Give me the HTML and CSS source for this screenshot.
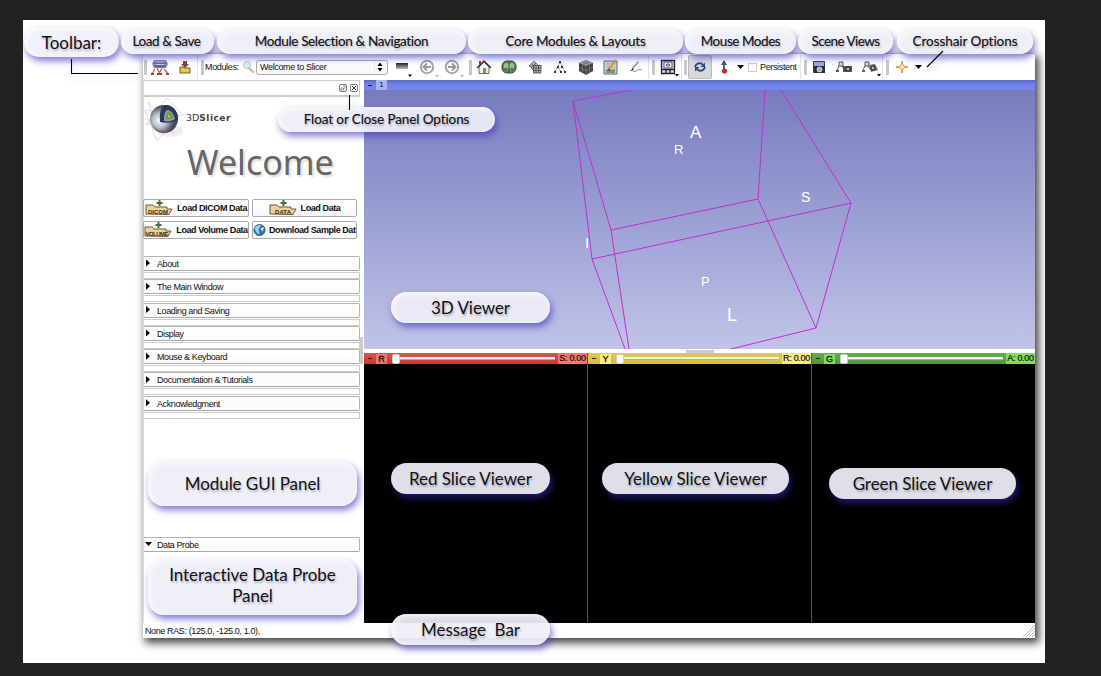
FILE: index.html
```html
<!DOCTYPE html>
<html lang="en">
<head>
<meta charset="utf-8">
<title>3D Slicer main window</title>
<link rel="stylesheet" href="styles.css">
</head>
<body>
<main class="sheet">
  <section class="app">
    <div class="toolbar">
      <i class="grip"></i>
      <svg width="18" height="18" viewBox="0 0 18 18"><path d="M4 11L1 16M6 10l3 6M13 11l4 5M11 10l-3 6" stroke="#a56a4c" stroke-width="1.3" fill="none"/><path d="M3 2h12l2 4-2 4H3L1 6z" fill="#8c8fc4"/><path d="M2 5h14M3 8h12M6 2v8M9 2v8M12 2v8" stroke="#474b83" stroke-width=".9"/><path d="M5 4h8M5 6.5h8" stroke="#dfe1f6" stroke-width=".8"/><path d="M0 15h3v2H0zM6 15h3v2H6zM9 15h2v2H9zM15 15h3v2h-3z" fill="#8d4b37"/></svg>
      <svg width="14" height="16" viewBox="0 0 14 16"><path d="M2 8h3l1 1h6v5H2z" fill="#ecc650" stroke="#725b26"/><path d="M5 2h4v3h2L7 9 3 5h2z" fill="#87452e"/></svg>
      <i class="divider"></i><i class="grip"></i>
      <span class="tool-label">Modules:</span>
      <svg width="13" height="14" viewBox="0 0 13 14"><path d="M7 8l4 4" stroke="#dfb67e" stroke-width="2.4" stroke-linecap="round"/><circle cx="5" cy="5" r="3.5" fill="#d6f0f7" stroke="#b9c8d2"/></svg>
      <div class="module-select"><span>Welcome to Slicer</span><svg width="12" height="12" viewBox="0 0 12 12"><path d="M0 0v12" stroke="#ddd"/><path d="M3.500 5L6 1.500 8.500 5zM3.500 7L6 10.500 8.500 7z"/></svg></div>
      <svg width="26" height="24" viewBox="0 0 26 24"><defs><linearGradient id="bar" x2="0" y2="1"><stop stop-color="#222"/><stop offset="1" stop-color="#bbb"/></linearGradient></defs><path d="M8 8h12v6H8z" fill="url(#bar)"/><path d="M20 19.500h4l-2 2.500z"/></svg>
      <svg width="24" height="24" viewBox="0 0 24 24"><circle cx="12" cy="12" r="6.200" fill="#fff" stroke="#a5a5a5" stroke-width="2"/><path d="M16 12H9M12 8.500L8.500 12l3.500 3.500" fill="none" stroke="#999" stroke-width="1.900"/><path d="M20 20h4l-2 2.500z" fill="#bbb"/></svg>
      <svg width="24" height="24" viewBox="0 0 24 24"><circle cx="12" cy="12" r="6.200" fill="#fff" stroke="#a5a5a5" stroke-width="2"/><path d="M8 12h7M12 8.500l3.500 3.500-3.500 3.500" fill="none" stroke="#999" stroke-width="1.900"/><path d="M20 20h4l-2 2.500z" fill="#bbb"/></svg>
      <i class="grip"></i>
      <svg width="16" height="16" viewBox="0 0 16 16"><path d="M3 8v6.500h10V8L8 3z" fill="#f5f5ee" stroke="#666"/><path d="M1 9l7-7 7 7" fill="none" stroke="#333" stroke-width="1.400"/><path d="M7 9h3v5H7z" fill="#c77435"/><path d="M3 2h2v3L3 6z" fill="#a33"/></svg>
      <svg width="16" height="14" viewBox="0 0 16 14"><rect x="1" y="1" width="14" height="12" rx="5" fill="#5d8a4e" stroke="#37483a"/><ellipse cx="5.500" cy="6" rx="2.600" ry="3" fill="#9cc48a"/><ellipse cx="10.500" cy="6" rx="2.600" ry="3" fill="#9cc48a"/><path d="M8 2v10M3 10l3-2M13 10l-3-2" stroke="#37583a" fill="none"/></svg>
      <svg width="14" height="14" viewBox="0 0 14 14"><path d="M1 6l5-4 3 3v6H6z" fill="#aaa"/><path d="M1 5l5 6M3 3l5 6M6 1l4 4M1 6l5-5M3 8l5-5" stroke="#555" stroke-width=".8"/><path d="M5 5h8v8H5z" fill="#bbb"/><path d="M5.500 5v8M8 5v8M10.500 5v8M13 5v8M5 5.500h8M5 8h8M5 10.500h8M5 13h8" stroke="#444" stroke-width=".8"/></svg>
      <svg width="14" height="14" viewBox="0 0 14 14"><path d="M7 2L2 12M7 2l5 10M5 7l3 5" fill="none" stroke="#555" stroke-dasharray="2 1"/><path d="M6 1h2v2H6zM1 11h2v2H1zM7 11h2v2H7zM11 11h2v2h-2zM4 6h2v2H4zM8 6h2v2H8z" fill="#333"/></svg>
      <svg width="16" height="17" viewBox="0 0 16 17"><path d="M8 1l7 3v8l-7 4-7-4V4z" fill="#444"/><path d="M1 4l7-3 7 3-7 3z" fill="#9b9b9b"/><path d="M8 7v9M1 8l7 4 7-4M4.500 5.500v8M11.500 5.500v8M4.500 2.500l7 3M11.500 2.500l-7 3" stroke="#777" stroke-width=".8" fill="none"/></svg>
      <svg width="15" height="16" viewBox="0 0 15 16"><path d="M1 2h13v13H1z" fill="#d8dde1" stroke="#506b82"/><path d="M1 5h13M1 8h13M1 11h13M5 2v13M9 2v13" stroke="#8aa1b5" stroke-width=".7"/><path d="M3 11c4-4 5 3 9-2v5H3z" fill="#81917a"/><path d="M13 1L6 10" stroke="#d6a52c" stroke-width="2.500"/><path d="M6 9l-1 3 2-1z" fill="#333"/></svg>
      <svg width="14" height="14" viewBox="0 0 14 14"><path d="M9.500 1.500L3 9" fill="none" stroke="#888" stroke-width="1.200"/><path d="M1 11c3-2 3 2 6 0s4-2 6-1" fill="none" stroke="#888"/><path d="M3.500 8l-1.500 3 3-1.500z" fill="#333"/></svg>
      <i class="divider"></i><i class="grip"></i>
      <svg width="22" height="24" viewBox="0 0 22 24"><path d="M4.500 5.500h13v13h-13zM4.500 14.500h13M9 14.500v4M13 14.500v4" fill="#d8daeb" stroke="#222" stroke-width="1.300"/><path d="M7 7h8v6H7z" fill="#fff" stroke="#444c88"/><path d="M9.500 9h3v2h-3z" fill="none" stroke="#444c88"/><path d="M18 19h4l-2 2.500z"/></svg>
      <i class="divider"></i><i class="grip"></i>
      <div class="mode-button"><svg width="14" height="14" viewBox="0 0 14 14"><path d="M2 7c1-4 6-5 8-2M12 7c-1 4-6 5-8 2" stroke="#254d8f" stroke-width="1.800" fill="none"/><path d="M12 2.500V7H7.500zM2 11.500V7h4.500z" fill="#254d8f"/></svg></div>
      <svg width="10" height="16" viewBox="0 0 10 16"><path d="M5 2v9" stroke="#333" stroke-width="1.500"/><path d="M2 6l3-5 3 5z" fill="#315f80"/><circle cx="5.500" cy="12" r="2.600" fill="#d7242a"/></svg>
      <svg width="7" height="4" viewBox="0 0 7 4"><path d="M0 0h7L3.500 4z"/></svg>
      <i class="checkbox"></i>
      <span class="tool-label">Persistent</span>
      <i class="divider"></i><i class="grip"></i>
      <svg width="14" height="16" viewBox="0 0 14 16"><path d="M1.500 2.500h11v11h-11z" fill="#9da7d5" stroke="#333c67"/><rect x="2" y="7" width="11" height="7" fill="#292c35"/><circle cx="7.500" cy="10.500" r="2.500" fill="#aab" stroke="#fff" stroke-width=".7"/></svg>
      <svg width="16" height="14" viewBox="0 0 16 14"><path d="M3 2h4v4H3zM3 6l-2 4M6 6l3 5" fill="#ddd" stroke="#555"/><path d="M0 10h3v2H0zM7 6h9v6H7z" fill="#555"/><circle cx="12" cy="9" r="2" fill="#bbb" stroke="#222"/></svg>
      <svg width="24" height="24" viewBox="0 0 24 24"><path d="M7 7h4v4H7zM7 11l-2 4M10 11l3 4" fill="#ddd" stroke="#555"/><path d="M4 15h3v2H4zM11 10l6-1 3 6-7 2z" fill="#666"/><circle cx="15" cy="13" r="2" fill="#bbb" stroke="#222"/><path d="M19 19h4l-2 2.500z"/></svg>
      <i class="divider"></i><i class="grip"></i>
      <svg width="14" height="14" viewBox="0 0 14 14"><path d="M7 1v12M1 7h12" stroke="#d78a2a" stroke-width="1.500"/><path d="M7 3l1.500 2.500L11 7 8.500 8.500 7 11 5.500 8.500 3 7l2.500-1.500z" fill="#fae2b2" stroke="#d79238"/></svg>
      <svg width="7" height="4" viewBox="0 0 7 4"><path d="M0 0h7L3.500 4z"/></svg>
    </div>

    <div class="workspace">
      <aside class="panel">
        <div class="panel-title">
          <svg width="8" height="8" viewBox="0 0 8 8"><rect x=".5" y=".5" width="7" height="7" rx="1.500" fill="#fff" stroke="#777"/><path d="M2 4h2.500v2H2zM4 2h2v2.500" fill="none" stroke="#666" stroke-width=".7"/></svg>
          <svg width="8" height="8" viewBox="0 0 8 8"><rect x=".5" y=".5" width="7" height="7" rx="1.500" fill="#fff" stroke="#777"/><path d="M2 2l4 4M6 2L2 6" stroke="#333"/></svg>
        </div>
        <div class="brand">
          <svg width="42" height="46" viewBox="0 0 42 46"><defs><radialGradient id="ball" cx=".35" cy=".55"><stop stop-color="#fff"/><stop offset=".5" stop-color="#b9bfce"/><stop offset="1" stop-color="#4b4b59"/></radialGradient></defs><path d="M2 13l34 5-22 26zM24 1L3 28l37-10zM5 5l27 32-19-9z" fill="none" stroke="#ccc" stroke-width=".7"/><ellipse cx="27" cy="34" rx="13" ry="6" fill="#ddd" opacity=".5"/><circle cx="21" cy="22" r="14" fill="url(#ball)"/><path d="M17 25C16 13 19 8 24 8c7 1 11 7 11 14-4 3-11 5-18 3z" fill="#2b385b"/><path d="M21 24c0-7 1-11 4-11 4 1 6 5 7 9-3 2-7 3-11 2z" fill="#8c9dac"/><path d="M23 22c0-4 1-7 3-7 3 1 4 4 4 6-2 1-5 2-7 1z" fill="#69983f"/><path d="M25 21v-4l3 3z" fill="#e0a94b"/><path d="M9 29c8 7 17 7 24 0-4 9-19 10-24 0z" fill="#754f50" opacity=".55"/></svg>
          <span class="brand-name">3D<b>Slicer</b></span>
        </div>
        <h1 class="welcome">Welcome</h1>
        <div class="loaders">
          <button class="loader"><svg width="28" height="16" viewBox="0 0 28 16"><path d="M1 14V5h7l2 2h12v2h5l-3 5.500z" fill="#ead09b" stroke="#6f5a32"/><path d="M13.500 0h2v2h2v2h-2v2h-2V4h-2V2h2z" fill="#43713b"/><text class="folder-text" x="13" y="13.500" textLength="20">DICOM</text></svg><span>Load DICOM Data</span></button>
          <button class="loader"><svg width="28" height="16" viewBox="0 0 28 16"><path d="M1 14V5h7l2 2h12v2h5l-3 5.500z" fill="#ead09b" stroke="#6f5a32"/><path d="M13.500 0h2v2h2v2h-2v2h-2V4h-2V2h2z" fill="#43713b"/><text class="folder-text" x="14" y="13.500" textLength="16">DATA</text></svg><span>Load Data</span></button>
          <button class="loader"><svg width="28" height="16" viewBox="0 0 28 16"><path d="M1 14V5h7l2 2h12v2h5l-3 5.500z" fill="#ead09b" stroke="#6f5a32"/><path d="M13.500 0h2v2h2v2h-2v2h-2V4h-2V2h2z" fill="#43713b"/><text class="folder-text" x="13" y="13.500" textLength="23">VOLUME</text></svg><span>Load Volume Data</span></button>
          <button class="loader sample"><svg width="13" height="14" viewBox="0 0 14 14"><circle cx="7" cy="7" r="6" fill="#3976ad" stroke="#275681"/><path d="M1.500 5C4 1 7 2 9 1L6 6l1 6-3-2z" fill="#9bd0ed"/><path d="M8 5l4-1-2 5z" fill="#eee9a8"/></svg><span>Download Sample Data</span></button>
        </div>
        <div class="sections">
          <div class="section">About</div><i class="strip"></i>
          <div class="section">The Main Window</div><i class="strip"></i>
          <div class="section">Loading and Saving</div><i class="strip"></i>
          <div class="section">Display</div><i class="strip"></i>
          <div class="section">Mouse &amp; Keyboard</div><i class="strip"></i>
          <div class="section">Documentation &amp; Tutorials</div><i class="strip"></i>
          <div class="section">Acknowledgment</div><i class="strip"></i>
        </div>
        <div class="section open">Data Probe</div>
        <i class="panel-handle"></i>
      </aside>

      <div class="views">
        <div class="view3d">
          <div class="view3d-bar"><i class="pin"></i><span>1</span></div>
          <svg class="scene" width="671" height="259" viewBox="364 90 671 259">
            <path class="wire" d="M632 90l-59 11 19 158 33 90M573 101l38 129 18 119M611 230l147-31 7-109M592 259l259-56-70-113M758 199l58 129 35-125M816 328l-85 21"/>
            <g class="axis"><text x="690" y="138" font-size="17">A</text><text x="674" y="154" font-size="13">R</text><text x="801" y="202" font-size="14">S</text><text x="585" y="248" font-size="15">I</text><text x="701" y="286" font-size="13">P</text><text x="727" y="321" font-size="18">L</text></g>
          </svg>
        </div>
        <div class="splitter"><i></i></div>
        <div class="slices">
          <div class="slice red"><div class="slice-bar"><i class="pin"></i><b>R</b><i class="track"></i><span>S: 0.00</span></div></div>
          <div class="slice yellow"><div class="slice-bar"><i class="pin"></i><b>Y</b><i class="track"></i><span>R: 0.00</span></div></div>
          <div class="slice green"><div class="slice-bar"><i class="pin"></i><b>G</b><i class="track"></i><span>A: 0.00</span></div></div>
        </div>
      </div>
    </div>
    <footer class="status"><span>None RAS: (125.0, -125.0, 1.0),</span><svg width="12" height="12" viewBox="0 0 12 12"><path d="M0 12L12 0M3 12l9-9M6 12l6-6M9 12l3-3" stroke="#aaa" stroke-width=".8"/></svg></footer>
  </section>

  <svg class="leaders" width="1022" height="642" viewBox="23 20 1022 642"><path d="M71.500 59v14.500H138M349.500 95v15M943 51l-16 16" fill="none" stroke="#000" stroke-width="1.100"/></svg>
  <div class="callout toolbar-note">Toolbar:</div>
  <div class="callout small load-note">Load &amp; Save</div>
  <div class="callout small modules-note">Module Selection &amp; Navigation</div>
  <div class="callout small core-note">Core Modules &amp; Layouts</div>
  <div class="callout small mouse-note">Mouse Modes</div>
  <div class="callout small scene-note">Scene Views</div>
  <div class="callout small cross-note">Crosshair Options</div>
  <div class="callout small float-note">Float or Close Panel Options</div>
  <div class="callout view-note">3D Viewer</div>
  <div class="callout red-note">Red Slice Viewer</div>
  <div class="callout yellow-note">Yellow Slice Viewer</div>
  <div class="callout green-note">Green Slice Viewer</div>
  <div class="callout gui-note">Module GUI Panel</div>
  <div class="callout probe-note">Interactive Data Probe<br>Panel</div>
  <div class="callout message-note">Message&nbsp; Bar</div>
</main>
</body>
</html>
```

FILE: styles.css
```css
* { box-sizing: border-box; }
body { margin: 0; padding: 20px 0 0 23px; height: 676px; overflow: hidden; background: #222; font: 9px "Liberation Sans", Arial, sans-serif; color: #111; }
svg { display: block; flex: none; }
.sheet { position: relative; width: 1022px; height: 642.500px; padding: 33px 10px 0 120px; background: #fff; overflow: hidden; }
.app { display: flex; flex-direction: column; width: 892px; height: 585px; background: #fff; box-shadow: 3px 4px 8px 1px rgba(0,0,0,.72); }

.toolbar { display: grid; height: 27px; flex: none; align-items: center; justify-items: center; border-top: 1px solid #bbb;
  grid-template-columns: 4px 25px 25px 3px 4px 36px 16px 132px 26px 25px 26px 10px 18px 32px 20px 30px 21px 28px 24px 3px 4px 26px 2px 4px 25px 24px 9px 14px 41px 3px 4px 24px 26px 25px 3px 4px 25px 8px; }
.grip { width: 3px; height: 15px; background: #c8c8c8; }
.divider { width: 1px; height: 24px; justify-self: start; background: #e2e2e2; }
.tool-label { justify-self: start; padding-left: 1px; white-space: nowrap; letter-spacing: -.35px; }
.module-select { display: flex; align-items: center; justify-content: space-between; width: 132px; height: 15px; padding: 0 1px 0 3px; border: 1px solid #aaa; border-radius: 3px; background: linear-gradient(#fff, #f4f4f4); letter-spacing: -.35px; }
.mode-button { display: flex; align-items: center; justify-content: center; width: 24px; height: 24px; border: 1px solid #bbb; border-radius: 2px; background: #d9d9d9; }
.checkbox { width: 9px; height: 9px; border: 1px solid #ccc; background: #fff; }

.workspace { display: flex; height: 543px; flex: none; }
.panel { position: relative; display: flex; flex-direction: column; width: 221px; padding-right: 4px; border-left: 1px solid #ddd; }
.panel-title { display: flex; justify-content: flex-end; align-items: center; gap: 3px; height: 17px; padding-right: 1px; border: solid #ccc; border-width: 1px 1px 2px 0; }
.brand { display: flex; align-items: center; height: 46px; margin-left: -1px; }
.brand-name { font: 9.500px "DejaVu Sans", sans-serif; color: #444; padding: 0 0 5px 1px; }
.brand-name b { font-size: 9px; letter-spacing: .5px; }
.welcome { margin: 0; padding-left: 43px; font: 34px/38px "Noto Sans", sans-serif; color: #666; text-shadow: 2px 2px 2px #ddd; }
.loaders { display: grid; grid-template-columns: 106px 105px; gap: 4px 3px; margin: 18px 0 0 -1px; }
.loader { display: flex; align-items: center; justify-content: center; gap: 4px; height: 18px; padding: 0 1px; overflow: hidden; white-space: nowrap; border: 1px solid #aaa; border-radius: 2px; background: linear-gradient(#fff, #f8f8f8); font: bold 9px "Liberation Sans", sans-serif; letter-spacing: -.4px; color: #111; }
.loader.sample { justify-content: flex-start; gap: 3px; padding: 0; letter-spacing: -.42px; }
.folder-text { font: bold 6px "Liberation Sans", sans-serif; letter-spacing: 0; text-anchor: middle; fill: #3b2e15; }
.sections { display: grid; grid-template-rows: repeat(7, 15px 8.300px); margin-top: 17px; height: 164px; }
.section { display: flex; align-items: center; height: 15px; padding-top: 1px; border: solid #b4b4b4; border-width: 1px 1px 1px 0; border-bottom-color: #aaa; border-radius: 0 2px 2px 0; background: linear-gradient(#fff, #fafafa); letter-spacing: -.4px; }
.section::before { content: ""; width: 4px; height: 7px; margin: 0 7px 2px 2px; background: #000; clip-path: polygon(0 0, 100% 50%, 0 100%); }
.section.open { margin-top: 117px; }
.section.open::before { width: 7px; height: 4px; margin: 0 5px 2px 1px; clip-path: polygon(0 0, 100% 0, 50% 100%); }
.strip { height: 7px; margin-top: 1px; border: solid #ccc; border-width: 1px 1px 1px 0; }
.panel-handle { position: absolute; right: 1px; top: 257px; width: 3px; height: 27px; background: #ccc; }

.views { display: flex; flex-direction: column; width: 671px; }
.view3d { height: 269px; background: linear-gradient(#7479bd, #c1c3e8); }
.view3d-bar { display: flex; align-items: center; height: 10px; background: linear-gradient(#5b68c8, #7585ec 50%, #7585ec); }
.view3d-bar span { width: 11px; height: 10px; line-height: 10px; text-align: center; background: #a9b3f3; font-size: 8px; }
.view3d-bar .pin { margin: 0 4px; }
.pin { width: 4px; height: 1px; background: #222; }
.wire { fill: none; stroke: #c02fd4; stroke-width: 1; }
.axis { fill: #fff; font-family: "Liberation Sans", sans-serif; }
.splitter { display: flex; align-items: flex-start; justify-content: center; height: 4px; background: #fff; }
.splitter i { width: 28px; height: 3px; margin-top: 1px; background: #ccc; }
.slices { display: grid; grid-template-columns: 223px 224px 224px; height: 270px; }
.slice { background: #000; border-left: 1px solid #555; }
.slice.red { border-left: 0; }
.slice-bar { display: flex; align-items: center; height: 11px; white-space: nowrap; }
.slice-bar .pin { margin: 0 4px; }
.slice-bar b { width: 11px; height: 10px; line-height: 10px; text-align: center; font-size: 9px; font-weight: 400; -webkit-text-stroke: .3px #111; }
.slice-bar span { width: 29px; line-height: 11px; text-align: center; letter-spacing: -.3px; -webkit-text-stroke: .2px #111; }
.track { position: relative; flex: 1; height: 3px; margin: 0 3px 0 5px; border-bottom: 1px solid #aaa; background: #eee; }
.track::before { content: ""; position: absolute; left: 0; top: -3px; width: 6px; height: 8px; border: 1px solid #ccc; border-radius: 2px; background: #fff; }
.red .slice-bar { background: linear-gradient(#d7584a, #bd3b2d); }
.red b, .red span { background: #f4796c; }
.yellow .slice-bar { background: linear-gradient(#dbca51, #d5bd42); }
.yellow b, .yellow span { background: #f9ec83; }
.green .slice-bar { background: linear-gradient(#6aab4d, #55943a); }
.green b, .green span { background: #82dc60; }
.status { display: flex; align-items: center; justify-content: space-between; height: 15px; padding-left: 2px; letter-spacing: -.38px; }

.leaders { position: absolute; left: 0; top: 0; z-index: 2; filter: drop-shadow(2px 4px 3px rgba(70,70,160,.25)); }
.callout { position: absolute; display: flex; align-items: center; justify-content: center; text-align: center; height: 31px; border-radius: 16px; background: rgba(238,238,247,.93); box-shadow: 2px 4px 7px rgba(60,55,185,.65), inset 2px 2px 6px rgba(255,255,255,.7); font: 17px/21px Lato, sans-serif; font-variant-ligatures: none; letter-spacing: -.05px; color: #101018; text-shadow: 1px 2px 2px rgba(0,0,0,.25); white-space: nowrap; }
.small { height: 25px; font-size: 13.500px; top: 9px; border-radius: 13px; -webkit-text-stroke: .15px #101018; }
.toolbar-note { left: 1px; top: 7px; width: 95px; height: 30px; background: #f1f1fb; }
.load-note { left: 98px; width: 93px; letter-spacing: -.4px; padding-right: 2px; }
.modules-note { left: 194px; width: 249px; letter-spacing: -.35px; }
.core-note { left: 445px; width: 215px; letter-spacing: -.25px; }
.mouse-note { left: 662px; width: 111px; letter-spacing: -.45px; }
.scene-note { left: 775px; width: 95px; letter-spacing: -.55px; }
.cross-note { left: 874px; width: 136px; letter-spacing: -.05px; }
.small.float-note { left: 255px; top: 87px; width: 217px; letter-spacing: -.1px; }
.view-note { left: 368px; top: 272px; width: 159px; }
.red-note { left: 368px; top: 443px; width: 159px; }
.yellow-note { left: 579px; top: 443px; width: 187px; }
.green-note { left: 806px; top: 448px; width: 187px; }
.gui-note { left: 125px; top: 441px; width: 209px; height: 45px; }
.probe-note { left: 125px; top: 539px; width: 209px; height: 56px; padding-bottom: 4px; }
.message-note { left: 368px; top: 594px; width: 159px; }
.red-note, .yellow-note, .green-note { background: #dfdfe8; box-shadow: 2px 4px 7px rgba(45,40,170,.65); }
```
